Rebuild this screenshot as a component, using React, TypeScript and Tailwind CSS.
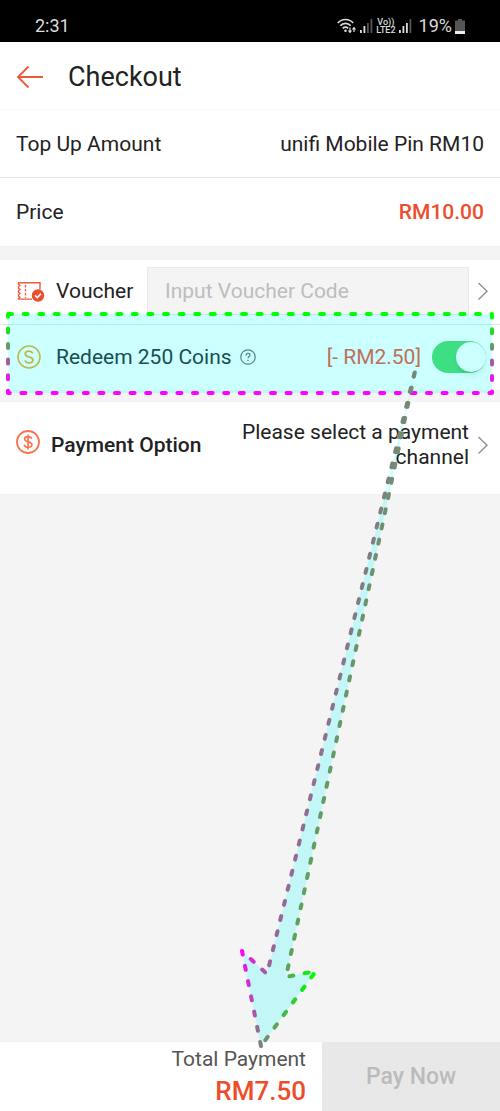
import type { ReactNode } from 'react';

const ChevronIcon = () => (
    <svg width="12" height="20" viewBox="0 0 12 20" fill="none" stroke="#8f8f8f" strokeWidth="1.4" aria-hidden="true">
        <path d="M1.5 2 10 10.2 1.5 18.5" />
    </svg>
);

const BackIcon = () => (
    <svg width="28" height="24" viewBox="0 0 28 24" fill="none" stroke="#f0583a" strokeWidth="1.8" aria-hidden="true">
        <path d="M12.5 1.5 2 12l10.5 10.5M2 12h25" />
    </svg>
);

const VoucherIcon = () => (
    <svg width="28" height="22" viewBox="0 0 28 22" fill="none" aria-hidden="true">
        <path
            d="M23 9.500V2.700H1.500v1.600l1.400 1-1.400 1.400v1.600l1.400 1-1.400 1.400v1.600l1.400 1-1.400 1.400v1.600l1.400 1-1.400 1v.8H15"
            stroke="#ee5a3c"
            strokeWidth="1.4"
        />
        <path d="M8.500 5v13" stroke="#ee5a3c" strokeWidth="1.3" strokeDasharray="2.500 1.500" />
        <circle cx="21" cy="15.500" r="6.200" fill="#ee4d2d" />
        <path d="m18 15.400 2.300 2.200 3.700-4" stroke="#fff" strokeWidth="1.6" />
    </svg>
);

const CoinIcon = () => (
    <svg width="24" height="24" viewBox="0 0 24 24" fill="none" stroke="#f0a81c" aria-hidden="true">
        <circle cx="12" cy="12" r="11" strokeWidth="1.6" />
        <path
            d="M15.800 8.300C15 6.800 13.700 6.200 12 6.200c-2.200 0-3.700 1.100-3.700 2.800 0 3.900 7.600 2 7.600 6 0 1.800-1.600 2.900-3.800 2.900-1.900 0-3.400-.8-4.100-2.400"
            strokeWidth="1.8"
        />
    </svg>
);

const HelpIcon = () => (
    <svg width="16" height="16" viewBox="0 0 16 16" fill="none" stroke="#666" aria-hidden="true">
        <circle cx="8" cy="8" r="7.200" strokeWidth="1.200" />
        <path d="M6 6.400c0-1.200.8-2 2-2s2 .8 2 1.800c0 1.300-2 1.500-2 3.100M8 10.700v1.300" strokeWidth="1.200" />
    </svg>
);

const DollarIcon = () => (
    <svg width="24" height="24" viewBox="0 0 24 24" fill="none" stroke="#f9734e" aria-hidden="true">
        <circle cx="12" cy="12" r="11" strokeWidth="1.800" />
        <path
            d="M15.700 8.900c-.4-1.400-1.700-2.300-3.600-2.300-2.100 0-3.500 1-3.500 2.500 0 3.700 7.300 1.900 7.300 5.500 0 1.600-1.500 2.700-3.700 2.700-2.200 0-3.700-1-4-2.700M12.100 4.500v15"
            strokeWidth="1.600"
        />
    </svg>
);

const WifiIcon = () => (
    <svg width="20" height="16" viewBox="0 0 20 16" fill="none" stroke="#ddd" aria-hidden="true">
        <path d="M.8 5C5 .3 12 .3 16.200 5M3.300 7.800c2.900-3.200 7.500-3.200 10.400 0M5.800 10.400c1.500-1.600 3.900-1.600 5.400 0" strokeWidth="1.700" />
        <circle cx="8.500" cy="12.800" r="1.300" fill="#ddd" stroke="none" />
        <path d="M13 9.500v5M17 14V9.500" strokeWidth="1.200" />
        <path d="m10.800 12.500 2.200 2.800 2.200-2.800zM14.800 11.500 17 8.700l2.200 2.800z" fill="#ddd" stroke="none" />
    </svg>
);

const SignalIcon = ({ level }: { level: number }) => (
    <svg width="13" height="14" viewBox="0 0 13 14" aria-hidden="true">
        {[3, 7, 10, 14].map((h, i) => (
            <rect key={h} x={i * 3.5} y={14 - h} width="1.800" height={h} fill={i < level ? '#ddd' : '#555'} />
        ))}
    </svg>
);

const BatteryIcon = () => (
    <svg width="10" height="15" viewBox="0 0 10 15" aria-hidden="true">
        <path d="M3 0h4v1.500h3V15H0V1.500h3z" fill="#555" />
        <path d="M0 12h10v3H0z" fill="#eee" />
    </svg>
);

const StatusBar = () => (
    <div className="flex h-[42px] items-center justify-between bg-black px-[35px] pt-2.5 text-[#dcdcdc]">
        <span className="text-lg leading-5">2:31</span>
        <div className="flex items-center gap-[3px]">
            <WifiIcon />
            <SignalIcon level={2} />
            <div className="flex flex-col items-center text-[9px] leading-2 font-medium">
                <span>Vo))</span>
                <span>LTE2</span>
            </div>
            <SignalIcon level={3} />
            <span className="ml-1 text-lg leading-5">19%</span>
            <BatteryIcon />
        </div>
    </div>
);

const InfoRow = ({ label, children }: { label: string; children: ReactNode }) => (
    <div className="flex h-[68px] items-center justify-between px-4">
        <span>{label}</span>
        {children}
    </div>
);

// dashed frame drawn on top of the coins row
const Highlight = () => (
    <svg
        className="pointer-events-none absolute -top-[13px] left-2 h-[81px] w-[calc(100%-16px)] overflow-visible"
        aria-hidden="true"
    >
        <defs>
            <linearGradient id="frame" x1="0" y1="0" x2="0" y2="1">
                <stop offset="0.1" stopColor="#0f0" />
                <stop offset="0.9" stopColor="#f0f" />
            </linearGradient>
        </defs>
        <rect
            y="2"
            width="100%"
            height="79"
            fill="#0ff"
            fillOpacity="0.2"
            stroke="url(#frame)"
            strokeWidth="4"
            strokeLinecap="round"
            strokeLinejoin="round"
            strokeDasharray="4 11.6"
        />
    </svg>
);

// arrow from the discount down to the total
const Arrow = () => (
    <svg
        className="pointer-events-none absolute top-[360px] right-[76px] overflow-visible"
        width="190"
        height="690"
        viewBox="234 360 190 690"
        aria-hidden="true"
    >
        <defs>
            <linearGradient id="arrow" gradientUnits="userSpaceOnUse" x1="241" y1="952" x2="316" y2="969">
                <stop offset="0" stopColor="#f0f" />
                <stop offset="1" stopColor="#0f0" />
            </linearGradient>
        </defs>
        <path
            d="M261 1046 242 951 267 974 416 367 286 977 316 971Z"
            fill="#0ff"
            fillOpacity="0.2"
            stroke="url(#arrow)"
            strokeWidth="4"
            strokeLinecap="round"
            strokeLinejoin="round"
            strokeDasharray="4 11.54"
        />
    </svg>
);

const App = () => {
    return (
        <div className="relative flex min-h-screen flex-col overflow-hidden bg-[#f4f4f4] font-[Roboto,sans-serif] text-[21px] leading-7 text-[#222]">
            <StatusBar />
            <header className="flex h-[68px] items-center gap-6 border-b border-[#f8f8f8] bg-white px-4 pt-0.5">
                <button type="button" aria-label="Back">
                    <BackIcon />
                </button>
                <h1 className="text-[27px] leading-8">Checkout</h1>
            </header>

            <main className="flex-1">
                <section className="divide-y divide-[#e5e5e5] bg-white">
                    <InfoRow label="Top Up Amount">
                        <span>unifi Mobile Pin RM10</span>
                    </InfoRow>
                    <InfoRow label="Price">
                        <span className="font-medium text-[#ee4d2d]">RM10.00</span>
                    </InfoRow>
                </section>

                <section className="mt-3.5 bg-white">
                    <div className="flex h-[65px] items-center border-b border-[#e5e5e5] pr-[11px] pb-0.5 pl-[17px]">
                        <VoucherIcon />
                        <label htmlFor="voucher" className="ml-[11px] w-[91px]">
                            Voucher
                        </label>
                        <input
                            id="voucher"
                            type="text"
                            placeholder="Input Voucher Code"
                            className="h-12 min-w-0 flex-1 border border-[#e8e8e8] bg-[#f4f4f4] px-[17px] placeholder:text-[#bdbdbd]"
                        />
                        <button type="button" aria-label="Choose voucher" className="ml-2">
                            <ChevronIcon />
                        </button>
                    </div>
                    <div className="relative flex h-[65px] items-center pr-[14px] pb-0.5 pl-[17px]">
                        <CoinIcon />
                        <label htmlFor="coins" className="ml-[15px]">
                            Redeem 250 Coins
                        </label>
                        <button type="button" aria-label="About coins" className="ml-2">
                            <HelpIcon />
                        </button>
                        <span className="mr-[11px] ml-auto text-[#ee4d2d]">[- RM2.50]</span>
                        <input
                            id="coins"
                            type="checkbox"
                            role="switch"
                            defaultChecked
                            className="flex h-8 w-[54px] appearance-none items-center justify-end rounded-full bg-[#4cd964] after:size-[30px] after:rounded-full after:bg-white after:shadow-md"
                        />
                        <Highlight />
                    </div>
                </section>

                <section className="mt-3 flex h-[92px] items-center bg-white pr-[11px] pb-1.5 pl-4">
                    <div className="pb-1.5">
                        <DollarIcon />
                    </div>
                    <span className="ml-[11px] font-medium">Payment Option</span>
                    <span className="ml-auto w-[240px] text-right leading-[25px]">Please select a payment channel</span>
                    <button type="button" aria-label="Choose payment channel" className="ml-2">
                        <ChevronIcon />
                    </button>
                </section>
            </main>

            <footer className="flex h-[69px] bg-white">
                <div className="flex flex-1 flex-col items-end justify-center pr-4 pb-1 leading-8">
                    <span className="text-[#555]">Total Payment</span>
                    <span className="text-[26px] font-medium text-[#ee4d2d]">RM7.50</span>
                </div>
                <button type="button" disabled className="w-[178px] bg-[#e8e8e8] text-[23px] font-medium text-[#bbb]">
                    Pay Now
                </button>
            </footer>

            <Arrow />
        </div>
    );
};

export default App;
